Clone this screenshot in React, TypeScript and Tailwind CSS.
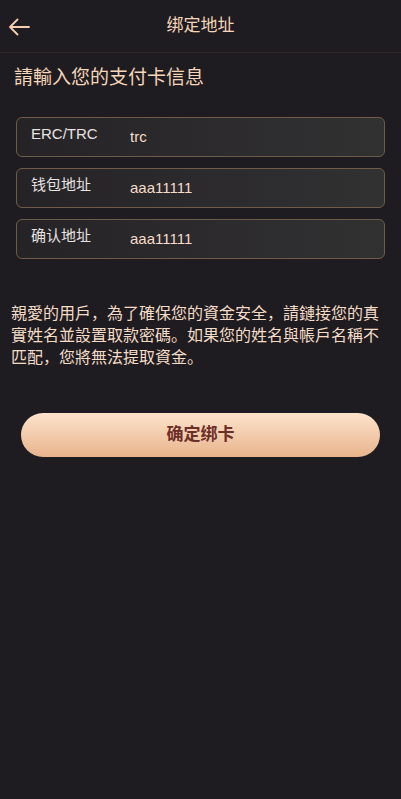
const fields = [
  { label: "ERC/TRC", value: "trc" },
  { label: "钱包地址", value: "aaa11111" },
  { label: "确认地址", value: "aaa11111" },
];

export default function App() {
  return (
    <div className="min-h-[799px] bg-[#1e1c20] font-['Liberation_Sans','Noto_Sans_CJK_SC',sans-serif]">
      <div className="relative flex h-[53px] items-center justify-center border-b border-[#2f2925]">
        <button className="absolute left-[8px] top-[17px] text-[#f3cfb0]">
          <svg width="22" height="20" viewBox="0 0 22 20" fill="none">
            <path d="M21 10H2M2 10L9.5 2.5M2 10L9.5 17.5" stroke="currentColor" strokeWidth="1.8" strokeLinecap="round" strokeLinejoin="round" />
          </svg>
        </button>
        <h1 className="text-[17px] text-[#f5d6ba]">绑定地址</h1>
      </div>

      <h2 className="mt-[12px] pl-[14px] text-[19px] leading-[26px] text-[#f5d6ba]">請輸入您的支付卡信息</h2>

      <div className="mt-[26px] flex flex-col gap-[11px] px-[16px]">
        {fields.map((f) => (
          <div
            key={f.label}
            className="flex h-[40px] items-start rounded-[6px] border border-[#6e5c4b] bg-gradient-to-r from-[#252326] to-[#323132] pl-[14px]"
          >
            <span className="mt-[7px] w-[99px] text-[15px] leading-[18px] text-[#e8e2e2]">{f.label}</span>
            <span className="mt-[10px] text-[15px] leading-[18px] text-[#f5dccb]">{f.value}</span>
          </div>
        ))}
      </div>

      <p className="mt-[44px] px-[11px] text-[16px] leading-[22px] text-[#f5dcc8]">
        親愛的用戶，為了確保您的資金安全，請鏈接您的真實姓名並設置取款密碼。如果您的姓名與帳戶名稱不匹配，您將無法提取資金。
      </p>

      <div className="mt-[44px] px-[21px]">
        <button className="flex h-[44px] w-full items-center justify-center rounded-full bg-gradient-to-b from-[#fde3cd] to-[#e8b48c] text-[17px] font-bold text-[#6c2f28]">
          确定绑卡
        </button>
      </div>
    </div>
  );
}
